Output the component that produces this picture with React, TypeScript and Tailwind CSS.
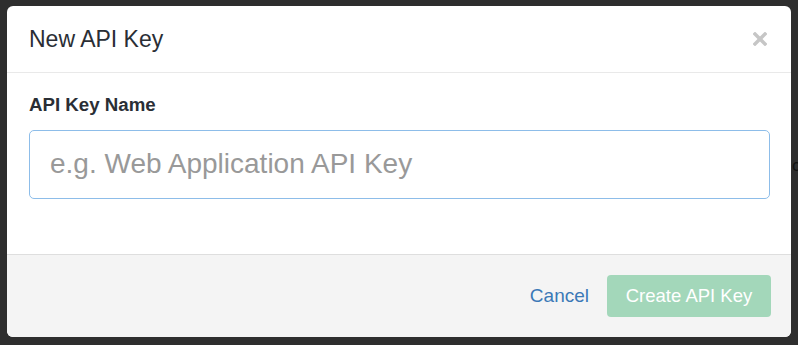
import React from 'react';

const font = { fontFamily: '"Liberation Sans", Arial, sans-serif' };

const CloseIcon: React.FC = () => (
  <svg width="14" height="14" viewBox="0 0 14 14" aria-hidden="true">
    <path d="M2 2 L12 12 M12 2 L2 12" stroke="#c6c6c6" strokeWidth="3.4" strokeLinecap="square" />
  </svg>
);

/**
 * "New API Key" modal on a dimmed page.
 */
const App: React.FC = () => (
  <div className="w-[798px] h-[345px] bg-[#2e2e2e] flex pt-[6px] pl-[7px] overflow-hidden" style={font}>
    <div className="w-[784px] h-[331px] shrink-0 bg-white rounded-[6px] flex flex-col overflow-hidden">
      <div className="h-[67px] shrink-0 flex items-center justify-between pl-[22px] pr-[24px] border-b border-[#e9e9e9]">
        <h2 className="text-[23px] leading-none text-[#2a2e35]">New API Key</h2>
        <button className="flex items-center">
          <CloseIcon />
        </button>
      </div>

      <div className="flex-1 flex flex-col pt-[23px] pl-[22px] pr-[21px]">
        <label className="text-[18.7px] leading-none font-bold text-[#2a2e35]">API Key Name</label>
        <input
          className="mt-[15px] w-full h-[69px] rounded-[5px] border border-[#8dbde9] pl-[20px] text-[28px] text-[#333] placeholder:text-[#999] outline-none"
          placeholder="e.g. Web Application API Key"
          style={font}
        />
      </div>

      <div className="h-[83px] shrink-0 bg-[#f4f4f4] border-t border-[#dedede] flex items-center justify-end gap-[18px] pr-[20px]">
        <button className="text-[19px] text-[#3b79b7]">Cancel</button>
        <button className="w-[164px] h-[42px] rounded-[4px] bg-[#a3d7ba] text-[18.5px] text-white">
          Create API Key
        </button>
      </div>
    </div>
    <div className="pt-[151px] pl-[1px] text-[17px] leading-none text-[#111]">c</div>
  </div>
);

export default App;
